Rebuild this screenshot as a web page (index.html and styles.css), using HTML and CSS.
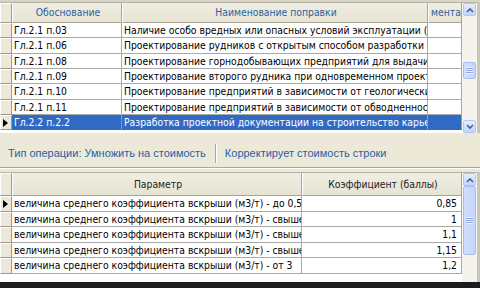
FILE: index.html
```html
<!DOCTYPE html>
<html lang="ru">
<head>
<meta charset="utf-8">
<link rel="stylesheet" href="styles.css">
</head>
<body>
<div class="win">
  <div class="grid grid-top">
    <div class="table">
      <div class="row head">
        <div class="ind"></div>
        <div class="c center">Обоснование</div>
        <div class="c center">Наименование поправки</div>
        <div class="c">мента з</div>
      </div>
      <div class="row"><div class="ind"></div><div class="c">Гл.2.1 п.03</div><div class="c">Наличие особо вредных или опасных условий эксплуатации (повышенная загазованность)</div><div class="c"></div></div>
      <div class="row"><div class="ind"></div><div class="c">Гл.2.1 п.06</div><div class="c">Проектирование рудников с открытым способом разработки</div><div class="c"></div></div>
      <div class="row"><div class="ind"></div><div class="c">Гл.2.1 п.08</div><div class="c">Проектирование горнодобывающих предприятий для выдачи</div><div class="c"></div></div>
      <div class="row"><div class="ind"></div><div class="c">Гл.2.1 п.09</div><div class="c">Проектирование второго рудника при одновременном проектировании</div><div class="c"></div></div>
      <div class="row"><div class="ind"></div><div class="c">Гл.2.1 п.10</div><div class="c">Проектирование предприятий в зависимости от геологических условий</div><div class="c"></div></div>
      <div class="row"><div class="ind"></div><div class="c">Гл.2.1 п.11</div><div class="c">Проектирование предприятий в зависимости от обводненности</div><div class="c"></div></div>
      <div class="row sel"><div class="ind"><span class="tri"></span></div><div class="c">Гл.2.2 п.2.2</div><div class="c">Разработка проектной документации на строительство карьера</div><div class="c"></div></div>
    </div>
    <div class="vscroll">
      <div class="sbtn"><svg width="8" height="6" viewBox="0 0 8 6"><polyline points="1,5 4,2 7,5" fill="none" stroke="#4d6185" stroke-width="1.6"/></svg></div>
      <div class="track t1"></div>
      <div class="thumb small"><span class="grip"></span></div>
      <div class="track t2"></div>
      <div class="sbtn"><svg width="8" height="6" viewBox="0 0 8 6"><polyline points="1,1 4,4 7,1" fill="none" stroke="#4d6185" stroke-width="1.6"/></svg></div>
    </div>
    <div class="edge"></div>
  </div>

  <div class="bar">
    <span class="link">Тип операции: Умножить на стоимость</span>
    <span class="sep"></span>
    <span class="link">Корректирует стоимость строки</span>
  </div>

  <div class="grid grid-bottom">
    <div class="table">
      <div class="row head">
        <div class="ind"></div>
        <div class="c center">Параметр</div>
        <div class="c center">Коэффициент (баллы)</div>
      </div>
      <div class="row"><div class="ind"><span class="tri"></span></div><div class="c">величина среднего коэффициента вскрыши (м3/т) - до 0,5</div><div class="c num">0,85</div></div>
      <div class="row"><div class="ind"></div><div class="c">величина среднего коэффициента вскрыши (м3/т) - свыше 0,5 до 1</div><div class="c num">1</div></div>
      <div class="row"><div class="ind"></div><div class="c">величина среднего коэффициента вскрыши (м3/т) - свыше 1 до 2</div><div class="c num">1,1</div></div>
      <div class="row"><div class="ind"></div><div class="c">величина среднего коэффициента вскрыши (м3/т) - свыше 2 до 3</div><div class="c num">1,15</div></div>
      <div class="row"><div class="ind"></div><div class="c">величина среднего коэффициента вскрыши (м3/т) - от 3</div><div class="c num">1,2</div></div>
    </div>
    <div class="vscroll">
      <div class="sbtn"><svg width="8" height="6" viewBox="0 0 8 6"><polyline points="1,5 4,2 7,5" fill="none" stroke="#4d6185" stroke-width="1.6"/></svg></div>
      <div class="thumb big"><span class="grip"></span></div>
      <div class="track t3"></div>
    </div>
    <div class="edge"></div>
  </div>
  <div class="frame-bottom"></div>
</div>
</body>
</html>
```
FILE: styles.css
```css
* { box-sizing: border-box; }
html, body { margin: 0; padding: 0; }
body {
  width: 480px;
  height: 288px;
  overflow: hidden;
  background: #ece9d8;
  font-family: "DejaVu Sans Condensed", "Liberation Sans", Arial, sans-serif;
  font-size: 10.3px;
  color: #000;
}
.win { width: 480px; height: 288px; display: flex; flex-direction: column; }

.grid { display: flex; flex: none; }
.grid-top { height: 133px; padding-top: 2px; background: #d8d5c6; }
.grid-bottom { height: 110px; margin-top: 4px; }

.table { width: 462px; background: #fff; overflow: hidden; border-top: 1px solid #b5b2a4; }

.row { display: grid; height: 15.33px; }
.grid-top .row { grid-template-columns: 12px 110px 306px 34px; }
.grid-bottom .row { grid-template-columns: 12px 290px 160px; height: 15.5px; }

.row .c {
  border-right: 1px solid #a9a9a9;
  border-bottom: 1px solid #a9a9a9;
  white-space: nowrap;
  overflow: hidden;
  padding-left: 2px;
  line-height: 14px;
}
.ind {
  background: #ece9d8;
  border-right: 1px solid #9d9a8c;
  border-bottom: 1px solid #9d9a8c;
  border-left: 1px solid #fff;
  border-top: 1px solid #fff;
  display: flex;
  align-items: center;
  padding-left: 2px;
}
.tri {
  width: 0; height: 0;
  border-top: 4px solid transparent;
  border-bottom: 4px solid transparent;
  border-left: 5px solid #000;
}

.row.head { height: 20px; }
.grid-bottom .row.head { height: 23px; }
.row.head .c {
  background: linear-gradient(#f0eee2, #e6e3d3);
  border-right: 1px solid #a8a592;
  border-bottom: 1px solid #a8a592;
  border-left: 1px solid #fff;
  line-height: 19px;
}
.grid-top .row.head .c { color: #2a5f9f; }
.grid-bottom .row.head .c { color: #222; line-height: 22px; }
.row.head .center { text-align: center; }

.row.sel .c { background: #316ac5; color: #fff; border-right-color: #7d9fd8; border-bottom-color: #316ac5; }

.num { text-align: right; padding-right: 4px; }

.vscroll {
  width: 15px;
  display: flex;
  flex-direction: column;
  background: #f7f7f2;
  border-top: 1px solid #b5b2a4;
}
.sbtn {
  height: 13px;
  margin: 0 1px;
  border: 1px solid #b4c7f2;
  border-radius: 2px;
  background: linear-gradient(#e6eeff, #c2d4fb);
  display: flex;
  align-items: center;
  justify-content: center;
}
.track { background: #f4f3ec; }
.t1 { height: 46px; }
.t2 { flex: 1; }
.t3 { flex: 1; }
.thumb {
  margin: 0 1px;
  border: 1px solid #a9bdee;
  border-radius: 2px;
  background: linear-gradient(90deg, #d2defc, #c4d4fb);
  display: flex;
  align-items: center;
  justify-content: center;
}
.thumb.small { height: 17px; }
.thumb.big { height: 69px; }
.grip {
  width: 7px; height: 7px;
  background: repeating-linear-gradient(#eef3ff 0 1px, #8fa6dd 1px 2px);
}
.edge { width: 3px; background: #c9c6b8; }

.bar {
  flex: none;
  height: 35px;
  display: flex;
  align-items: center;
  gap: 8px;
  padding-left: 8px;
  padding-top: 6px;
  border-bottom: 1px solid #aca899;
  box-shadow: 0 1px 0 #fff;
  font-family: "Liberation Sans", Arial, sans-serif;
  font-size: 11px;
}
.link { color: #2362a8; }
.sep { width: 1px; height: 19px; background: #aca899; box-shadow: 1px 0 0 #fff; margin: 0 1px; }

.frame-bottom { flex: 1; background: #1c1c1c; }
```
